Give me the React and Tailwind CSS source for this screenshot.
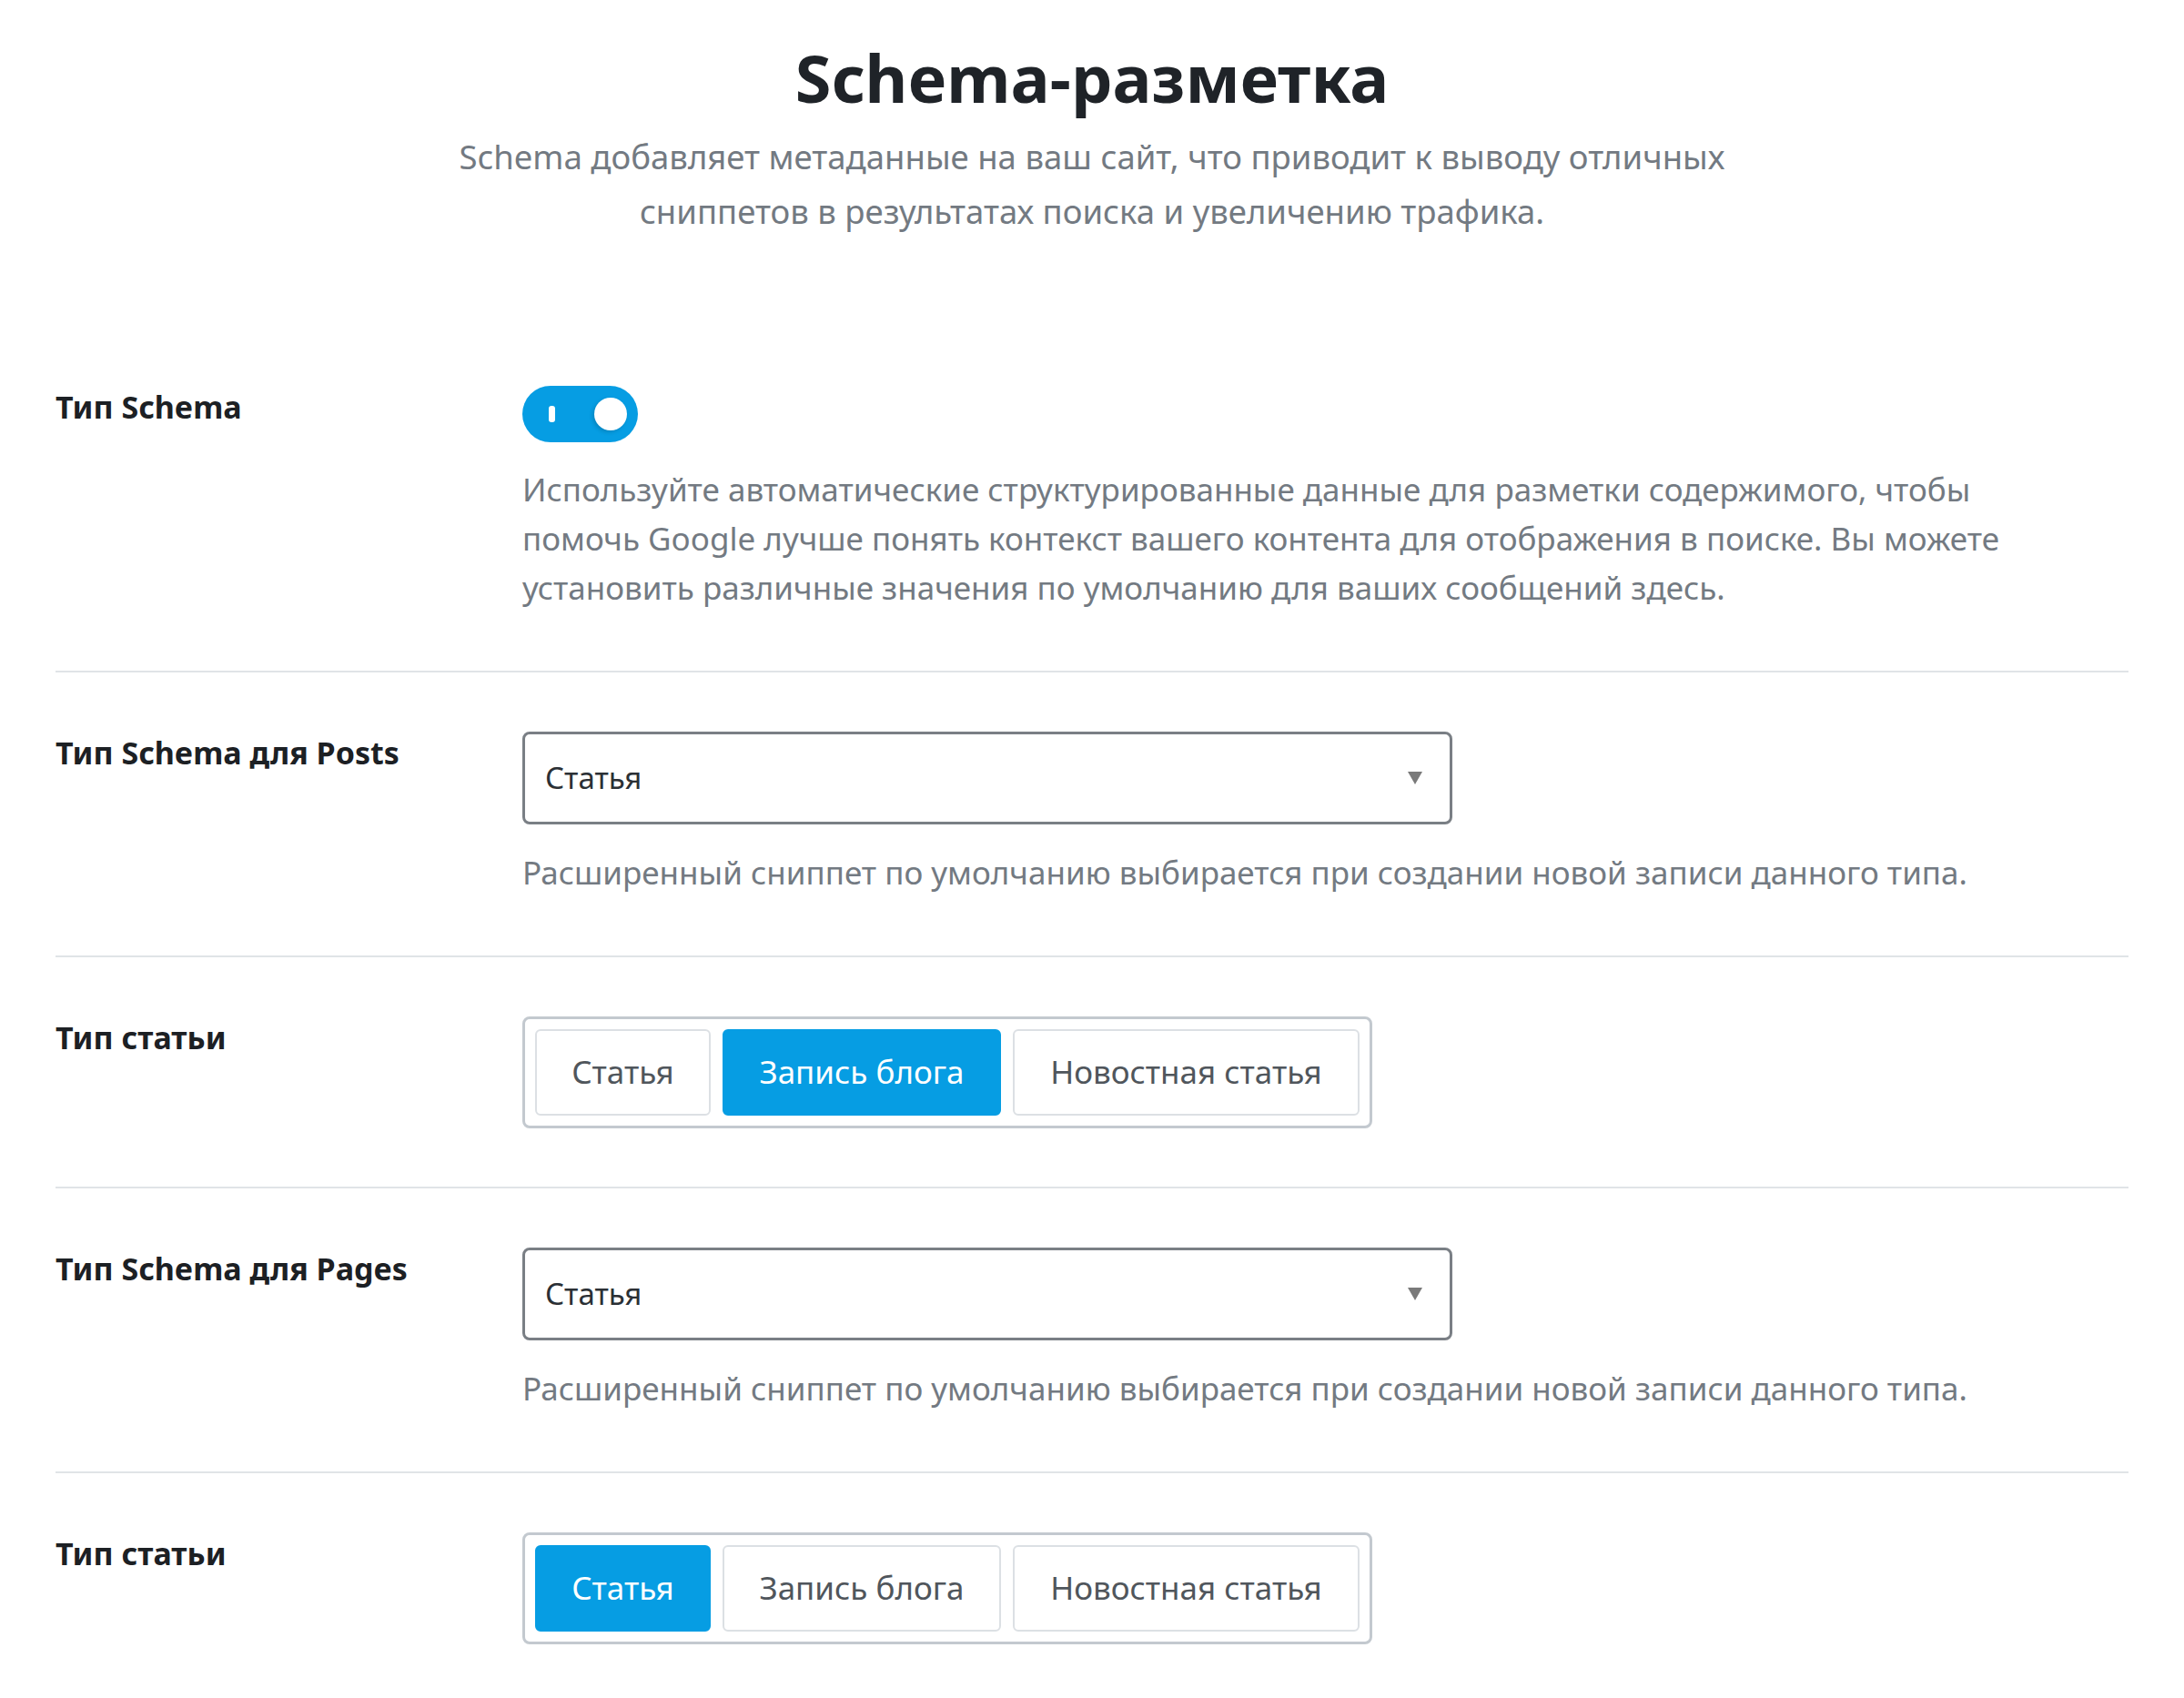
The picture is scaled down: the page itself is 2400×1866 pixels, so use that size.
import { useState } from "react";

function Toggle() {
  const [on, setOn] = useState(true);
  return (
    <button
      type="button"
      onClick={() => setOn(!on)}
      className="relative flex h-[62px] w-[127px] items-center rounded-full bg-[#069de3]"
    >
      <span className="absolute left-[29px] top-[22px] h-[18px] w-[7px] rounded-[3px] bg-white" />
      <span className="absolute left-[79px] top-[13px] h-[36px] w-[36px] rounded-full bg-white shadow-[-2px_2px_4px_rgba(0,0,0,0.15)]" />
    </button>
  );
}

function Select({ value }) {
  return (
    <div className="flex h-[102px] w-[1022px] items-center justify-between rounded-[8px] border-[3px] border-[#7a7f85] bg-white pl-[22px] pr-[30px]">
      <span className="text-[33px] text-[#2b3035]">{value}</span>
      <svg width="16" height="14" viewBox="0 0 16 14">
        <polygon points="0,0 16,0 8,14" fill="#7a7a7a" />
      </svg>
    </div>
  );
}

function Segmented({ options, active }) {
  return (
    <div className="inline-flex gap-[13px] rounded-[8px] border-[3px] border-[#c3c9cf] bg-white p-[11px]">
      {options.map((o, i) => (
        <button
          key={o.label}
          type="button"
          style={{ width: o.w }}
          className={
            i === active
              ? "h-[95px] rounded-[6px] border-2 border-[#069de3] bg-[#069de3] text-[35px] text-white"
              : "h-[95px] rounded-[6px] border-2 border-[#dce0e4] bg-white text-[35px] text-[#50565c]"
          }
        >
          {o.label}
        </button>
      ))}
    </div>
  );
}

function Row({ label, children, last }) {
  return (
    <div className={last ? "flex pt-[65px] pb-[64px]" : "flex border-b-2 border-[#e0e4e7] pt-[65px] pb-[64px]"}>
      <div className="w-[513px] shrink-0 text-[34px] font-bold leading-[46px] text-[#1c2024]">{label}</div>
      <div className="flex-1">{children}</div>
    </div>
  );
}

const help = "Расширенный сниппет по умолчанию выбирается при создании новой записи данного типа.";

const articleTypes = [
  { label: "Статья", w: 193 },
  { label: "Запись блога", w: 306 },
  { label: "Новостная статья", w: 381 },
];

export default function App() {
  return (
    <div className="min-h-[1866px] bg-white px-[61px] font-['Noto_Sans',sans-serif]">
      <div className="pt-[32px] text-center">
        <h1 className="text-[72px] font-bold leading-[106px] text-[#1f2328]">Schema-разметка</h1>
        <p className="mx-auto mt-[4px] max-w-[1480px] text-[36.5px] leading-[60px] text-[#737a82]">
          Schema добавляет метаданные на ваш сайт, что приводит к выводу отличных сниппетов в результатах поиска и увеличению трафика.
        </p>
      </div>

      <div className="mt-[97px]">
        <Row label="Тип Schema">
          <Toggle />
          <p className="mt-[25px] max-w-[1640px] text-[35px] leading-[54px] text-[#737a82]">
            Используйте автоматические структурированные данные для разметки содержимого, чтобы помочь Google лучше понять контекст вашего контента для отображения в поиске. Вы можете установить различные значения по умолчанию для ваших сообщений здесь.
          </p>
        </Row>
        <Row label="Тип Schema для Posts">
          <Select value="Статья" />
          <p className="mt-[26px] text-[35px] leading-[54px] text-[#737a82]">{help}</p>
        </Row>
        <Row label="Тип статьи">
          <Segmented options={articleTypes} active={1} />
        </Row>
        <Row label="Тип Schema для Pages">
          <Select value="Статья" />
          <p className="mt-[26px] text-[35px] leading-[54px] text-[#737a82]">{help}</p>
        </Row>
        <Row label="Тип статьи" last>
          <Segmented options={articleTypes} active={0} />
        </Row>
      </div>
    </div>
  );
}
